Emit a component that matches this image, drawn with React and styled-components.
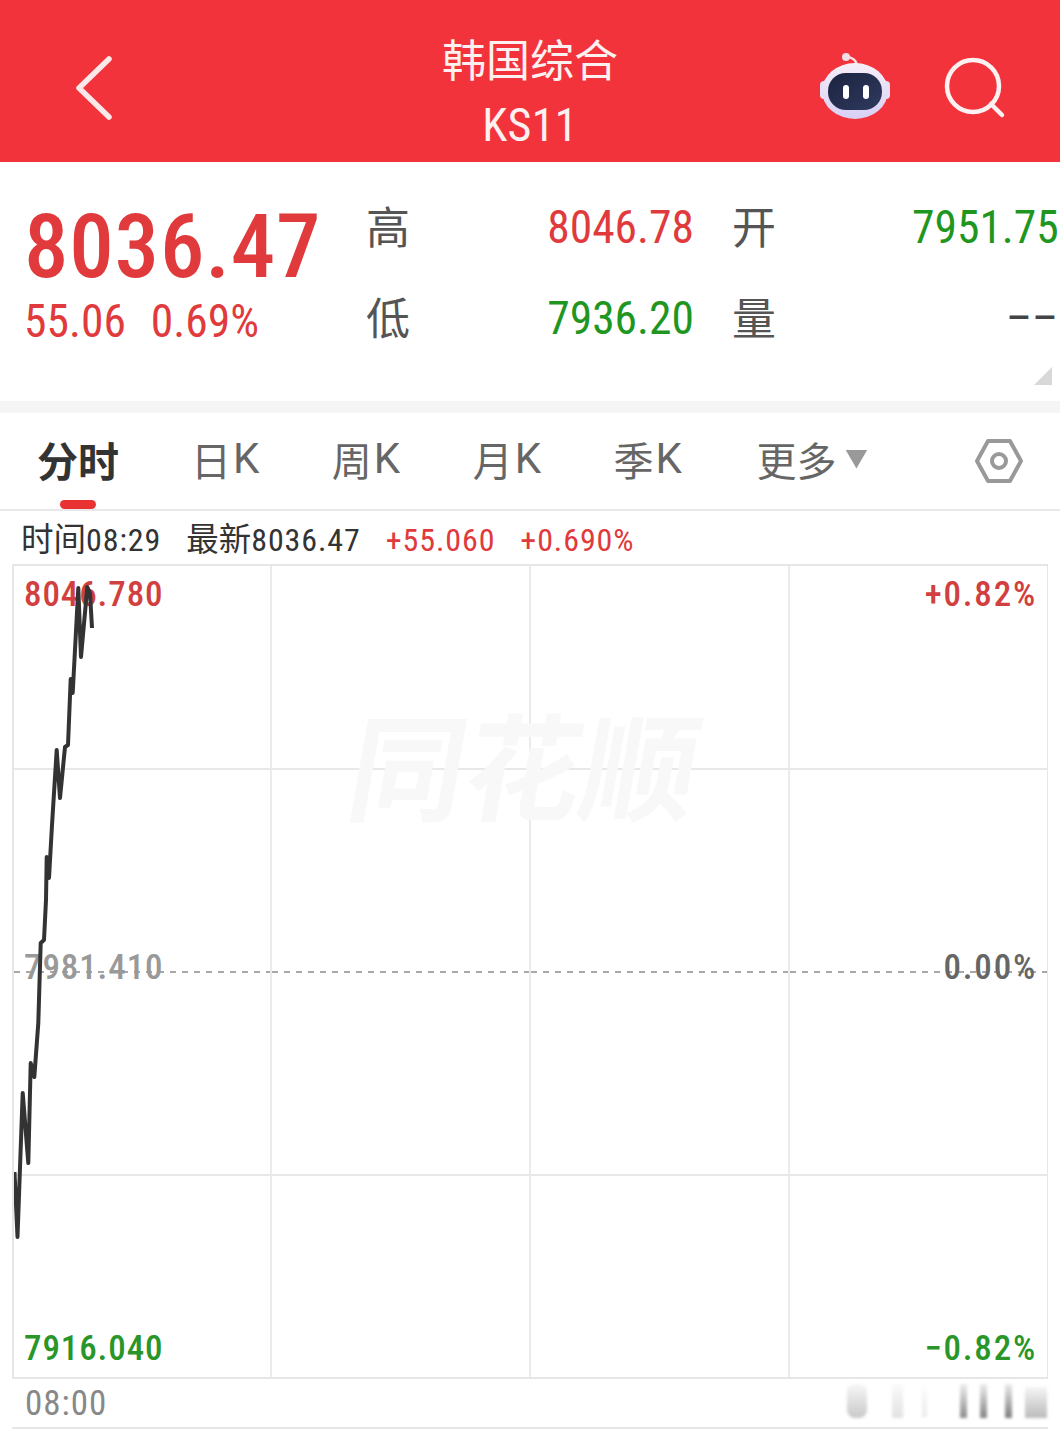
import React from 'react';
import styled, { createGlobalStyle } from 'styled-components';

const CJK = '"Noto Sans CJK SC", "Noto Sans", sans-serif';
const NARROW = '"Roboto Condensed", Roboto, "Noto Sans CJK SC", sans-serif';
const RED = '#e03a3c';
const GREEN = '#1f961f';
const LABEL_RED = '#d23f40';
const LABEL_GREEN = '#2a962a';

const Global = createGlobalStyle`
  html, body { margin: 0; padding: 0; background: #fff; width: 1060px; height: 1430px; overflow: hidden; }
  * { box-sizing: border-box; }
`;
const Page = styled.div`width: 1060px; height: 1430px; overflow: hidden; background: #fff; font-family: ${CJK};`;

const Header = styled.header`
  height: 162px; background: #f3333b; display: grid; grid-template-columns: 1fr auto 1fr; align-items: center; padding: 14px 54px 0 54px;
`;
const HeaderSide = styled.div`display: flex; align-items: center; justify-content: ${p => p.$end ? 'flex-end' : 'flex-start'}; gap: 52px; padding-left: ${p => p.$end ? 0 : 20}px;`;
const TitleBlock = styled.div`display: flex; flex-direction: column; align-items: center; color: #fff; margin-top: 2px;`;
const Title = styled.div`font-size: 44px; line-height: 56px; font-weight: 400; margin-top: 4px; color: #fdf0f0;`;
const Code = styled.div`font-family: ${NARROW}; font-size: 46px; line-height: 56px; margin-top: 11px; letter-spacing: .3px; color: #fdf0f0;`;

const Quote = styled.section`height: 239px; position: relative; display: flex; padding-top: 19px;`;
const Main = styled.div`width: 366px; padding: 22px 0 0 24px; flex: none; color: ${RED};`;
const BigPrice = styled.div`font-family: ${NARROW}; font-weight: 500; font-size: 89px; line-height: 88px; letter-spacing: .8px;`;
const Change = styled.div`display: flex; gap: 25px; font-family: ${NARROW}; font-size: 45.5px; line-height: 50px; margin-top: 6px; padding-left: 0;`;
const Stats = styled.div`display: grid; grid-template-columns: 180px 148px 38px 180px 146px; grid-auto-rows: 91px; align-items: center;`;
const StatLabel = styled.div`font-size: 44px; line-height: 89px; padding-bottom: 2px; color: #555; grid-column: ${p => p.$col};`;
const StatValue = styled.div`font-family: ${NARROW}; font-size: 45.5px; line-height: 91px; padding-top: 2px; text-align: right; white-space: nowrap; color: ${p => p.$color}; grid-column: ${p => p.$col};`;
const Corner = styled.div`position: absolute; right: 8px; bottom: 16px; width: 18px; height: 18px; background: #d8d8d8; clip-path: polygon(100% 0, 100% 100%, 0 100%);`;
const Band = styled.div`height: 12px; background: #f5f5f5;`;

const Tabs = styled.nav`height: 98px; display: flex; align-items: center; padding: 0 36px 0 37px; border-bottom: 2px solid #e8e8e8; gap: 72.5px;`;
const Tab = styled.div`
  position: relative; font-size: ${p => p.$active ? 41 : 40}px; line-height: 92px; height: 96px; padding-bottom: 4px; white-space: nowrap; display: flex; align-items: center;
  color: ${p => p.$active ? '#333' : '#666'}; font-weight: ${p => p.$active ? 700 : 400};
  margin: 0 ${p => p.$after || 0}px 0 ${p => p.$before || 0}px;
  span { font-family: Roboto, sans-serif; font-size: 42px; margin-left: 2px; }
  ${p => p.$active && `&::after { content: ''; position: absolute; left: 23px; bottom: 0; width: 36px; height: 9px; border-radius: 5px; background: #e93232; }`}
`;
const Caret = styled.i`display: block; width: 22px; height: 19px; margin-left: 9px; background: #999; clip-path: polygon(0 0, 100% 0, 50% 100%);`;
const Gear = styled.svg`margin-left: auto; flex: none;`;

const Info = styled.div`height: 53px; display: flex; align-items: baseline; gap: 25px; padding: 4px 0 0 21px; font-family: ${NARROW}; font-size: 32px; letter-spacing: .9px; line-height: 44px; white-space: nowrap;`;
const InfoItem = styled.div`color: ${p => p.$color || '#333'}; b { font-family: ${CJK}; font-weight: 400; font-size: 32.5px; letter-spacing: 0; }`;

const Chart = styled.div`
  position: relative; margin: 0 12px; height: 815px; border: 2px solid #e6e6e6; border-right-width: 1px; overflow: hidden;
  display: grid; grid-template-columns: 257.5px 259px 259px 1fr; grid-template-rows: 204px 203px 203px 1fr;
`;
const Cell = styled.div`
  border-right: ${p => p.$last ? 'none' : '2px solid #ebebeb'};
  border-bottom: ${p => p.$bottom || p.$dashed ? 'none' : '2px solid #e8e8e8'};
  ${p => p.$dashed && `background: repeating-linear-gradient(90deg, #a8a8a8 0 6px, transparent 6px 12px) left bottom / 100% 2px no-repeat;`}
`;
const Watermark = styled.div`
  position: absolute; left: 338px; top: 130px; font-size: 116px; line-height: 130px; font-weight: 700; color: #f8f8f8;
  transform: skewX(-10deg); white-space: nowrap;
`;
const ChartLine = styled.svg`position: absolute; left: -14px; top: -566px; overflow: visible; pointer-events: none;`;
const Label = styled.div`
  position: absolute; font-family: ${NARROW}; font-weight: 500; font-size: 35px; letter-spacing: ${p => p.$right ? 1.8 : .9}px; line-height: 40px; white-space: nowrap; color: ${p => p.$color};
  ${p => p.$right ? 'right: 10px;' : 'left: 10px;'} top: ${p => p.$top}px;
`;

const Axis = styled.div`
  position: relative; margin: 0 12px; height: 50px; border-bottom: 2px solid #e6e6e6; padding-left: 13px;
  font-family: ${NARROW}; font-size: 35px; letter-spacing: 1px; line-height: 50px; color: #888;
`;
const Smudge = styled.svg`position: absolute; right: -8px; top: 0;`;

const points = '14.5,1172 17.5,1237 22.7,1093 28.3,1163 30.7,1063 34.3,1077 38.3,1023 40.7,943 44,940 46,900 46.7,857 49,878 52,825 56.7,750 60,798 65,747 68,745 70.7,679 72.7,693 78.3,588 81,657 87.3,587 90,593 92,628';

const Robot = () => (
  <svg width="74" height="70" viewBox="0 0 74 70">
    <defs>
      <linearGradient id="shell" x1="0" y1="0" x2="0" y2="1"><stop offset="0" stopColor="#f6eef8" /><stop offset="1" stopColor="#d8d0f5" /></linearGradient>
      <linearGradient id="face" x1="0" y1="0" x2="1" y2="1"><stop offset="0" stopColor="#1c2340" /><stop offset="1" stopColor="#2f3a5e" /></linearGradient>
    </defs>
    <path d="M28 4 C34 4 39 7 39 14" fill="none" stroke="#f3e4ec" strokeWidth="2.5" />
    <circle cx="28" cy="4" r="4" fill="#f3dfe8" />
    <rect x="2" y="28" width="8" height="18" rx="4" fill="#e6dff5" />
    <rect x="64" y="28" width="8" height="18" rx="4" fill="#e6dff5" />
    <ellipse cx="37" cy="38" rx="33" ry="28" fill="url(#shell)" />
    <rect x="10" y="20" width="54" height="37" rx="18" fill="url(#face)" />
    <rect x="25" y="32" width="6" height="14" rx="3" fill="#fff" />
    <rect x="45" y="32" width="6" height="14" rx="3" fill="#fff" />
  </svg>
);

export default function App() {
  const cells = [];
  for (let r = 0; r < 4; r++) for (let c = 0; c < 4; c++) cells.push(
    <Cell key={`${r}-${c}`} $last={c === 3} $bottom={r === 3} $dashed={r === 1} />
  );
  return (
    <Page>
      <Global />
      <Header>
        <HeaderSide>
          <svg width="40" height="66" viewBox="0 0 40 66"><path d="M35 4 L5 33 L35 62" fill="none" stroke="#fbe9ea" strokeWidth="5.5" strokeLinecap="round" strokeLinejoin="round" /></svg>
        </HeaderSide>
        <TitleBlock>
          <Title>韩国综合</Title>
          <Code>KS11</Code>
        </TitleBlock>
        <HeaderSide $end>
          <Robot />
          <svg width="62" height="62" viewBox="0 0 62 62"><circle cx="29" cy="29" r="26" fill="none" stroke="#fdf1f1" strokeWidth="4.5" /><path d="M47 47 L58 58" stroke="#fdf1f1" strokeWidth="4.5" strokeLinecap="round" /></svg>
        </HeaderSide>
      </Header>

      <Quote>
        <Main>
          <BigPrice>8036.47</BigPrice>
          <Change><span>55.06</span><span>0.69%</span></Change>
        </Main>
        <Stats>
          <StatLabel $col={1}>高</StatLabel>
          <StatValue $col={2} $color={RED}>8046.78</StatValue>
          <StatLabel $col={4}>开</StatLabel>
          <StatValue $col={5} $color={GREEN}>7951.75</StatValue>
          <StatLabel $col={1}>低</StatLabel>
          <StatValue $col={2} $color={GREEN}>7936.20</StatValue>
          <StatLabel $col={4}>量</StatLabel>
          <StatValue $col={5} $color="#444">––</StatValue>
        </Stats>
        <Corner />
      </Quote>
      <Band />

      <Tabs>
        <Tab $active $after={-.5}>分时</Tab>
        <Tab>日<span>K</span></Tab>
        <Tab>周<span>K</span></Tab>
        <Tab>月<span>K</span></Tab>
        <Tab>季<span>K</span></Tab>
        <Tab $before={2}>更多<Caret /></Tab>
        <Gear width="50" height="46" viewBox="0 0 50 46">
          <path d="M14 3 H36 L47 23 L36 43 H14 L3 23 Z" fill="none" stroke="#999" strokeWidth="4" strokeLinejoin="round" />
          <circle cx="25" cy="23" r="7" fill="none" stroke="#999" strokeWidth="4" />
        </Gear>
      </Tabs>

      <Info>
        <InfoItem><b>时间</b>08:29</InfoItem>
        <InfoItem><b>最新</b>8036.47</InfoItem>
        <InfoItem $color={RED}>+55.060</InfoItem>
        <InfoItem $color={RED}>+0.690%</InfoItem>
      </Info>

      <Chart>
        {cells}
        <Watermark>同花顺</Watermark>
        <Label $color={LABEL_RED} $top={9}>8046.780</Label>
        <Label $color="#999" $top={382}>7981.410</Label>
        <Label $color={LABEL_GREEN} $top={763}>7916.040</Label>
        <Label $color={LABEL_RED} $right $top={9}>+0.82%</Label>
        <Label $color="#666" $right $top={382}>0.00%</Label>
        <Label $color={LABEL_GREEN} $right $top={763}>−0.82%</Label>
        <ChartLine width="120" height="1300">
          <polyline points={points} fill="none" stroke="#333" strokeWidth="4" strokeLinejoin="round" />
        </ChartLine>
      </Chart>

      <Axis>
        08:00
        <Smudge width="215" height="48" viewBox="0 0 215 48">
          <defs>
            <filter id="blur"><feGaussianBlur stdDeviation="1.8" /></filter>
            <linearGradient id="fade" x1="0" y1="0" x2="0" y2="1"><stop offset="0" stopColor="#777" stopOpacity=".15" /><stop offset="1" stopColor="#777" stopOpacity="1" /></linearGradient>
          </defs>
          <g filter="url(#blur)" fill="url(#fade)">
            <rect x="6" y="5" width="20" height="34" rx="8" opacity=".4" />
            <rect x="51" y="5" width="11" height="34" opacity=".22" />
            <rect x="81" y="8" width="5" height="30" opacity=".15" />
            <rect x="119" y="5" width="7" height="34" opacity=".85" />
            <rect x="139" y="5" width="7" height="34" opacity=".9" />
            <rect x="164" y="5" width="7" height="34" opacity=".95" />
            <rect x="184" y="8" width="22" height="31" opacity=".5" />
          </g>
        </Smudge>
      </Axis>
    </Page>
  );
}
